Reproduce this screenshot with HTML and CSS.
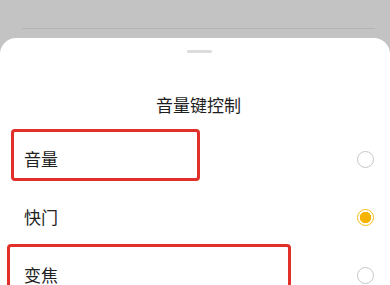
FILE: index.html
```html
<!DOCTYPE html>
<html lang="zh-CN">
<head>
  <meta charset="UTF-8">
  <title>音量键控制</title>
  <link rel="stylesheet" href="styles.css">
</head>
<body>
  <div class="backdrop">
    <div class="backdrop-line"></div>
  </div>
  <div class="sheet">
    <div class="handle"></div>
    <h2 class="title">音量键控制</h2>
    <div class="options">
      <div class="option">
        <span class="label">音量</span>
        <span class="radio"></span>
        <div class="mark mark-volume"></div>
      </div>
      <div class="option">
        <span class="label">快门</span>
        <span class="radio checked"></span>
      </div>
      <div class="option">
        <span class="label">变焦</span>
        <span class="radio"></span>
        <div class="mark mark-zoom"></div>
      </div>
    </div>
  </div>
</body>
</html>
```

FILE: styles.css
```css
html, body {
  margin: 0;
  height: 285px;
  overflow: hidden;
}
body {
  background: #c3c3c3;
  font-family: "Noto Sans CJK SC", "Noto Sans", sans-serif;
  color: #222;
}
.backdrop {
  height: 38px;
  padding: 0 15px 0 22px;
}
.backdrop-line {
  height: 28px;
  border-bottom: 1px solid #b4b4b4;
}
.sheet {
  background: #fff;
  border-radius: 16px 16px 0 0;
  padding-top: 12px;
  height: 235px;
  overflow: hidden;
}
.handle {
  width: 25px;
  height: 3px;
  border-radius: 2px;
  background: #dcdcdc;
  margin: 0 auto;
  transform: translateX(4px);
}
.title {
  margin: 40px 0 0;
  font-size: 17px;
  font-weight: normal;
  line-height: 24px;
  text-align: center;
  padding-left: 7px;
  color: #1e1e1e;
}
.options {
  margin-top: 13px;
}
.option {
  position: relative;
  height: 58px;
  display: flex;
  align-items: center;
  justify-content: space-between;
  padding: 0 16px 0 24px;
}
.label {
  font-size: 17px;
  line-height: 24px;
}
.radio {
  width: 15px;
  height: 15px;
  border: 1.5px solid #c6c6c6;
  border-radius: 50%;
  box-sizing: content-box;
}
.radio.checked {
  border-color: #f6bd16;
  background: radial-gradient(circle, #f6b400 0 5.5px, #fff 6px);
}
.mark {
  position: absolute;
  border: 3px solid #e1302a;
  border-radius: 4px;
}
.mark-volume {
  left: 11px;
  top: -1px;
  width: 183px;
  height: 46px;
}
.mark-zoom {
  left: 7px;
  top: -2px;
  width: 278px;
  height: 60px;
}
```
